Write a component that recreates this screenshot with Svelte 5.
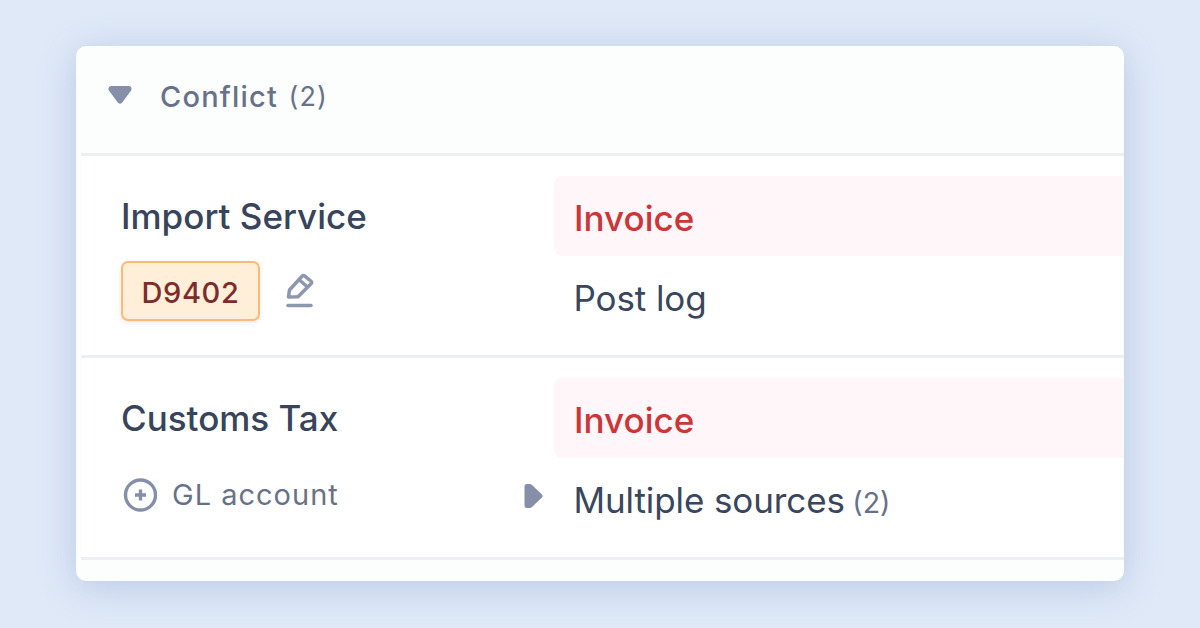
<script>
  const rows = [
    { name: 'Import Service', detail: 'Post log', code: 'D9402' },
    { name: 'Customs Tax', detail: 'Multiple sources', count: 2, account: 'GL account' }
  ];
</script>

<div class="page">
  <section class="card">
    <header class="head">
      <svg class="caret" width="26" height="20" viewBox="0 0 26 20"><path d="M4.5 4H21.5L13 15.5Z" /></svg>
      <span class="title">Conflict</span>
      <span class="count">(2)</span>
    </header>

    {#each rows as row}
      <div class="row">
        <div class="left">
          <div class="name">{row.name}</div>
          {#if row.code}
            <div class="meta">
              <span class="code">{row.code}</span>
              <svg class="pencil" width="30" height="36" viewBox="0 0 30 36" fill="none">
                <path d="M3.5 24l1-7L17 3.3a2 2 0 0 1 2.8-.2L25.8 8a2 2 0 0 1 .2 2.8L13 23.8z" stroke-linejoin="round" />
                <path d="M14.5 7l8 7" />
                <path d="M3 32.5H26" class="bar" />
              </svg>
            </div>
          {:else}
            <div class="account">
              <svg width="34" height="34" viewBox="0 0 34 34" fill="none">
                <circle cx="17.5" cy="17" r="15" />
                <path d="M17.5 11.5v11M12 17h11" />
              </svg>
              <span>{row.account}</span>
            </div>
          {/if}
        </div>
        <div class="right">
          <div class="flagged">Invoice</div>
          <div class="detail">
            {#if row.count}
              <svg class="side" width="20" height="26" viewBox="0 0 20 26"><path d="M4 3.5H7L17 13L7 22.5H4Z" /></svg>
            {/if}
            <span class="label">{row.detail}</span>
            {#if row.count}<span class="num">({row.count})</span>{/if}
          </div>
        </div>
      </div>
    {/each}

    <div class="foot"></div>
  </section>
</div>

<style>
  :global(body) {
    margin: 0;
    background: #dfe9f8;
  }
  .page {
    width: 1200px;
    height: 628px;
    box-sizing: border-box;
    padding: 46px 76px 47px;
    overflow: hidden;
    font-family: Inter, "Liberation Sans", sans-serif;
  }
  .card {
    height: 535px;
    background: #fcfdfd;
    border-radius: 10px;
    overflow: hidden;
    padding-left: 5px;
    box-shadow: 0 6px 36px rgba(100, 130, 180, 0.3);
    box-sizing: border-box;
  }
  .head {
    height: 110px;
    display: flex;
    align-items: center;
    border-bottom: 3px solid #edeff1;
    padding-left: 26px;
    padding-bottom: 7px;
    box-sizing: border-box;
  }
  .caret {
    fill: #858fa8;
    stroke: #858fa8;
    stroke-width: 6;
    stroke-linejoin: round;
    margin-right: 27px;
    margin-top: -2px;
  }
  .title {
    font-size: 29px;
    font-weight: 500;
    letter-spacing: 1.2px;
    color: #67728a;
  }
  .count {
    font-size: 27px;
    color: #67728a;
    letter-spacing: 1px;
    margin-left: 10.5px;
  }
  .row {
    display: grid;
    grid-template-columns: 473px 1fr;
    height: 202px;
    box-sizing: border-box;
    background: #fff;
    border-bottom: 3px solid #edeff1;
  }
  .left {
    padding: 40px 0 0 40px;
  }
  .name {
    font-size: 35px;
    font-weight: 500;
    line-height: 40px;
    color: #37445b;
  }
  .meta {
    display: flex;
    align-items: center;
    gap: 25px;
    margin-top: 25px;
  }
  .code {
    width: 139px;
    height: 60px;
    box-sizing: border-box;
    display: flex;
    align-items: center;
    justify-content: center;
    padding-top: 2px;
    background: #ffefd9;
    border: 2.5px solid #fdba74;
    border-radius: 7px;
    box-shadow: 0 2px 6px rgba(0, 0, 0, 0.08);
    color: #7b2d2d;
    font-size: 29px;
    font-weight: 500;
    letter-spacing: 0.6px;
  }
  .pencil {
    stroke: #8d97ae;
    stroke-width: 3.5;
  }
  .pencil .bar {
    stroke-width: 3.5;
    stroke-linecap: round;
  }
  .account {
    display: flex;
    align-items: center;
    gap: 15px;
    margin-top: 39px;
    margin-left: 2px;
    font-size: 29px;
    color: #67728a;
    letter-spacing: 1px;
  }
  .account svg {
    stroke: #858fa8;
    stroke-width: 3.4;
  }
  .right {
    padding-top: 20px;
  }
  .flagged {
    height: 80px;
    box-sizing: border-box;
    display: flex;
    align-items: center;
    padding-left: 20px;
    padding-top: 3px;
    background: #fff6f9;
    border-radius: 8px 0 0 8px;
    color: #cb3738;
    font-size: 35px;
    font-weight: 500;
  }
  .detail {
    position: relative;
    padding-left: 19.5px;
    margin-top: 21px;
    font-size: 35px;
    line-height: 42px;
    color: #3a465d;
  }
  .label {
    letter-spacing: -0.1px;
  }
  .side {
    position: absolute;
    left: -31px;
    top: 4px;
    fill: #858fa8;
    stroke: #858fa8;
    stroke-width: 5;
    stroke-linejoin: round;
  }
  .num {
    font-size: 28.5px;
    color: #67728a;
    margin-left: -2.5px;
  }
  .foot {
    height: 21px;
  }
</style>
